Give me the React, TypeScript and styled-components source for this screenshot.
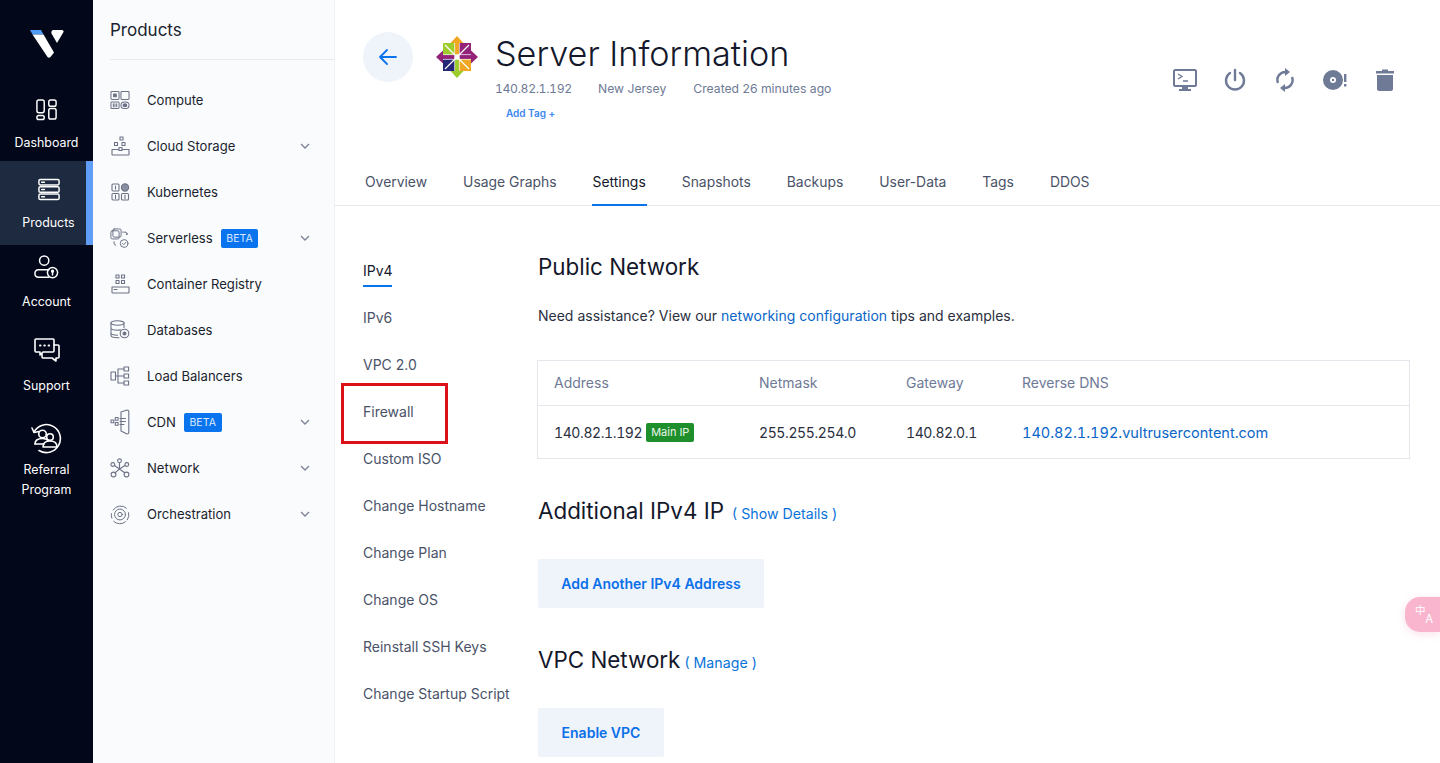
import React from "react";
import styled, { createGlobalStyle } from "styled-components";

const GlobalStyle = createGlobalStyle`
  html, body {
    margin: 0;
    padding: 0;
    height: 763px;
    overflow: hidden;
    background: #fff;
    font-family: Inter, "Liberation Sans", sans-serif;
    color: #1d2233;
  }
  * { box-sizing: border-box; }
`;

const Page = styled.div`
  display: flex;
  height: 763px;
  width: 1440px;
  position: relative;
  overflow: hidden;
`;

const Rail = styled.nav`
  width: 93px;
  flex: none;
  background: #03071a;
  display: flex;
  flex-direction: column;
  align-items: stretch;
`;

const LogoWrap = styled.div`
  height: 90px;
  display: flex;
  justify-content: center;
  padding-top: 29px;
`;

const RailItem = styled.a<{ $active?: boolean; $h: number; $pt: number; $gap: number }>`
  position: relative;
  height: ${(p) => p.$h}px;
  display: flex;
  flex-direction: column;
  align-items: center;
  color: #fff;
  font-size: 12.4px;
  line-height: 20px;
  text-align: center;
  background: ${(p) => (p.$active ? "#1e2a3f" : "transparent")};
  padding-top: ${(p) => p.$pt}px;
  padding-left: ${(p) => (p.$active ? 4 : 0)}px;
  svg { display: block; margin-bottom: ${(p) => p.$gap}px; }
  ${(p) =>
    p.$active
      ? `&::after {
          content: "";
          position: absolute;
          right: 0;
          top: 0;
          bottom: 0;
          width: 7px;
          background: #5f9df7;
        }`
      : ""}
`;

const SubNav = styled.aside`
  width: 242px;
  flex: none;
  background: #fafbfd;
  border-right: 1px solid #eff1f5;
`;

const SubNavTitle = styled.div`
  height: 60px;
  margin-left: 17px;
  padding-top: 19px;
  border-bottom: 1px solid #e8eaee;
  font-size: 17px;
  line-height: 22px;
  color: #1b1f2e;
`;

const SubNavList = styled.div`
  padding-top: 17px;
`;

const SubNavRow = styled.a`
  height: 46px;
  display: flex;
  align-items: center;
  padding-left: 17px;
  padding-right: 24px;
  font-size: 13.1px;
  color: #1b1f2e;
`;

const SubNavIcon = styled.span`
  width: 20px;
  height: 24px;
  margin-right: 17px;
  display: flex;
  align-items: center;
  justify-content: center;
  flex: none;
`;

const Beta = styled.span`
  margin-left: 8px;
  background: #0a73ee;
  color: #dcebff;
  font-size: 10.5px;
  line-height: 19px;
  height: 19px;
  padding: 0 5.5px;
  border-radius: 2px;
  letter-spacing: 0.1px;
`;

const Chevron = styled.svg`
  margin-left: auto;
`;

const Main = styled.main`
  flex: 1;
  min-width: 0;
  background: #fff;
  display: flex;
  flex-direction: column;
`;

const Head = styled.header`
  height: 127px;
  padding: 32px 43px 0 28px;
  display: flex;
  align-items: flex-start;
`;

const BackButton = styled.button`
  width: 50px;
  height: 50px;
  border: 0;
  border-radius: 50%;
  background: #eff4fb;
  display: flex;
  align-items: center;
  justify-content: center;
  margin-right: 22px;
  flex: none;
`;

const OsLogo = styled.div`
  width: 44px;
  height: 44px;
  margin-top: 3px;
  margin-right: 16px;
  flex: none;
`;

const TitleBlock = styled.div`
  display: flex;
  flex-direction: column;
`;

const Title = styled.h1`
  margin: 0;
  font-size: 34.2px;
  line-height: 44px;
  font-weight: 300;
  color: #14182b;
`;

const MetaRow = styled.div`
  display: flex;
  gap: 27px;
  margin-top: 4px;
  font-size: 12.2px;
  line-height: 18px;
  color: #6e7a96;
`;

const MetaIp = styled.span`
  width: 76px;
  font-variant-numeric: tabular-nums;
  letter-spacing: -0.35px;
  white-space: nowrap;
`;

const AddTag = styled.a`
  margin: 8px 0 0 11px;
  font-size: 10px;
  line-height: 14px;
  font-weight: 600;
  color: #3b86ee;
`;

const Actions = styled.div`
  margin-left: auto;
  display: flex;
  gap: 26px;
  padding-top: 36px;
  svg { display: block; }
`;

const TabBar = styled.div`
  height: 79px;
  flex: none;
  border-bottom: 1px solid #e6e8ee;
  display: flex;
  align-items: flex-end;
  padding-left: 30px;
  gap: 36px;
`;

const Tab = styled.a<{ $active?: boolean }>`
  height: 36px;
  font-size: 13.9px;
  line-height: 24px;
  padding: 0 1px;
  margin: 0 -1px -1px;
  color: ${(p) => (p.$active ? "#14182b" : "#4a5268")};
  border-bottom: 2px solid ${(p) => (p.$active ? "#0a73ee" : "transparent")};
`;

const Body = styled.div`
  flex: 1;
  display: flex;
`;

const SideMenu = styled.div`
  width: 203px;
  flex: none;
  padding: 41px 0 0 28px;
  display: flex;
  flex-direction: column;
  position: relative;
`;

const SideItem = styled.a<{ $active?: boolean }>`
  height: 47px;
  font-size: 14px;
  line-height: 47px;
  color: ${(p) => (p.$active ? "#14182b" : "#4a5268")};
  white-space: nowrap;
  position: relative;
  ${(p) =>
    p.$active
      ? `&::after {
          content: "";
          position: absolute;
          left: 0;
          top: 38px;
          width: 29px;
          height: 2px;
          background: #0a73ee;
        }`
      : ""}
`;

const RedBox = styled.div`
  position: absolute;
  left: 6px;
  top: 177px;
  width: 107px;
  height: 61px;
  border: 3px solid #dc1018;
  pointer-events: none;
`;

const Content = styled.section`
  flex: 1;
  padding: 45px 30px 0 0;
`;

const H2 = styled.h2<{ $gap?: number }>`
  margin: 0;
  height: 32px;
  font-size: 22.4px;
  line-height: 32px;
  font-weight: 400;
  color: #14182b;
  display: flex;
  align-items: baseline;
  gap: ${(p) => p.$gap ?? 8}px;
`;

const DetailLink = styled.a`
  font-size: 14.2px;
  color: #0a73d9;
  font-weight: 400;
`;

const Para = styled.p`
  margin: 23px 0 0;
  font-size: 14px;
  line-height: 20px;
  color: #2a2f40;
  a { color: #0a66c8; }
`;

const Table = styled.div`
  margin: 34px 0 0 -1px;
  height: 99px;
  border: 1px solid #e4e6eb;
`;

const TableRow = styled.div<{ $head?: boolean }>`
  display: grid;
  grid-template-columns: 205px 147px 116px 1fr;
  height: ${(p) => (p.$head ? 45 : 52)}px;
  align-items: center;
  padding-left: 16px;
  padding-bottom: ${(p) => (p.$head ? 2 : 0)}px;
  border-bottom: ${(p) => (p.$head ? "1px solid #e4e6eb" : "none")};
  font-size: 14px;
  color: ${(p) => (p.$head ? "#6e7a96" : "#2a2f40")};
`;

const NumCell = styled.div`
  display: flex;
  align-items: center;
  gap: 4px;
  font-variant-numeric: tabular-nums;
  letter-spacing: -0.4px;
`;

const MainIp = styled.span`
  background: #1f8f2c;
  color: #e8f6e8;
  font-size: 11px;
  line-height: 19px;
  height: 19px;
  padding: 0 5px;
  border-radius: 2px;
  letter-spacing: 0;
`;

const DnsLink = styled.a`
  color: #0a66c8;
  font-size: 14.5px;
  font-variant-numeric: tabular-nums;
`;

const SectionHead = styled(H2)<{ $mt: number }>`
  margin-top: ${(p) => p.$mt}px;
`;

const ActionButton = styled.button<{ $w: number }>`
  display: block;
  width: ${(p) => p.$w}px;
  height: 49px;
  margin-top: 32px;
  border: 0;
  border-radius: 2px;
  background: #eff4fb;
  color: #0a6fe8;
  font-family: inherit;
  font-size: 14px;
  font-weight: 600;
`;

const Floater = styled.div`
  position: absolute;
  right: 0;
  top: 597px;
  width: 35px;
  height: 35px;
  background: #f9b4ce;
  border-radius: 15px 0 0 15px;
  box-shadow: 0 2px 8px rgba(240, 180, 200, 0.4);
  color: #fff;
  font-family: "Noto Sans CJK SC", sans-serif;
  display: flex;
  padding: 7px 0 0 10px;
`;

const FloaterZh = styled.span`
  font-size: 10.5px;
  line-height: 12px;
`;

const FloaterA = styled.span`
  font-size: 12px;
  line-height: 13px;
  margin-top: 7px;
`;

const railStroke = {
  fill: "none",
  stroke: "#fff",
  strokeWidth: 1.6,
  strokeLinejoin: "round" as const,
  strokeLinecap: "round" as const,
};

const subStroke = {
  fill: "none",
  stroke: "#6c7386",
  strokeWidth: 1.1,
  strokeLinejoin: "round" as const,
  strokeLinecap: "round" as const,
};

const ChevronDown = () => (
  <Chevron width="10" height="6" viewBox="0 0 10 6">
    <path d="M1 1l4 4 4-4" fill="none" stroke="#7b8296" strokeWidth="1.3" />
  </Chevron>
);

const subIcons: Record<string, React.ReactNode> = {
  compute: (
    <svg width="21" height="20" viewBox="0 0 21 20" {...subStroke}>
      <rect x="1" y="1" width="8.5" height="8.5" rx="1" />
      <rect x="3.8" y="3.8" width="2.8" height="2.8" fill="#6c7386" />
      <rect x="11.5" y="1" width="8.5" height="8.5" rx="1" />
      <rect x="1" y="12" width="8.5" height="7" rx="1" />
      <path d="M3.5 14v3M5.2 14v3M7 14v3" />
      <rect x="11.5" y="12" width="8.5" height="7" rx="3.5" />
      <ellipse cx="15.7" cy="15.5" rx="2" ry="1.6" fill="#6c7386" />
    </svg>
  ),
  storage: (
    <svg width="19" height="20" viewBox="0 0 19 20" {...subStroke}>
      <rect x="9" y="1" width="3" height="3" />
      <rect x="3.5" y="6.5" width="3" height="3" />
      <rect x="11" y="6.5" width="3" height="3" />
      <path d="M1 18.5v-5h17v5c0 .3-.3 .5-.5 .5h-16c-.2 0-.5-.2-.5-.5z" />
      <rect x="8" y="11.5" width="3" height="3" fill="#fafbfd" />
    </svg>
  ),
  kube: (
    <svg width="19" height="18" viewBox="0 0 19 18" {...subStroke}>
      <rect x="1" y="1" width="7" height="7" rx="1" />
      <path d="M4.5 3v3" />
      <circle cx="14" cy="4.5" r="3.6" fill="#8a90a2" />
      <rect x="1" y="10.5" width="7" height="6.5" rx="1" />
      <path d="M4.5 12v3.5" />
      <rect x="10.5" y="10.5" width="7" height="6.5" rx="1" />
      <path d="M14 12v3.5" />
    </svg>
  ),
  serverless: (
    <svg width="22" height="23" viewBox="0 0 22 23" {...subStroke}>
      <rect x="1" y="3" width="9" height="9" rx="1.5" />
      <rect x="3.2" y="1" width="9" height="9" rx="1.5" />
      <path d="M14 4.5h3.5l1.5 2M18.5 5.5l.6 1.3-1.3.3M4.5 15v2.5l2 1.5" />
      <circle cx="15.5" cy="17" r="4.2" />
      <path d="M13.8 17l1.3 1.3 2.2-2.4" />
    </svg>
  ),
  registry: (
    <svg width="19" height="20" viewBox="0 0 19 20" {...subStroke}>
      <rect x="5" y="1" width="3" height="3" />
      <rect x="10.5" y="1" width="3" height="3" />
      <rect x="5" y="6.5" width="3" height="3" />
      <rect x="10.5" y="6.5" width="3" height="3" />
      <path d="M1 18.5V13h17v5.5c0 .3-.3 .5-.5 .5h-16c-.2 0-.5-.2-.5-.5z" />
      <path d="M3 15.5h3" />
    </svg>
  ),
  database: (
    <svg width="20" height="20" viewBox="0 0 20 20" {...subStroke}>
      <ellipse cx="7.5" cy="3" rx="6.5" ry="2.2" />
      <path d="M1 3v12.5c0 1.3 3 2.2 6.5 2.2H9M1 8c0 1.3 3 2.2 6.5 2.2 1 0 2-.1 3-.3M1 13c0 1.3 3 2.2 6.5 2.2M14 3v4.5" />
      <circle cx="14.5" cy="13.5" r="4.3" />
      <circle cx="14.5" cy="13.5" r="1.5" fill="#6c7386" />
    </svg>
  ),
  balancer: (
    <svg width="20" height="20" viewBox="0 0 20 20" {...subStroke}>
      <rect x="1" y="6" width="4.5" height="8" />
      <path d="M8 3v14M5.5 10H14M8 3h6M8 17h6" />
      <rect x="14" y="1" width="4.6" height="4" />
      <rect x="14" y="8" width="4.6" height="4" />
      <rect x="14" y="15" width="4.6" height="4" />
    </svg>
  ),
  cdn: (
    <svg width="20" height="26" viewBox="0 0 20 26" {...subStroke}>
      <path d="M11 3l6-2c1 0 1.8.5 1.8 1.5v21c0 1-.8 1.5-1.8 1.5l-6-3z" />
      <rect x="1" y="11" width="2.8" height="2.8" />
      <rect x="5.3" y="8.5" width="2.8" height="2.8" />
      <rect x="5.3" y="13.5" width="2.8" height="2.8" />
      <path d="M10 9.5h5.5M10 12.5h5.5M10 15.5h4" />
    </svg>
  ),
  network: (
    <svg width="20" height="20" viewBox="0 0 20 20" {...subStroke}>
      <circle cx="9.5" cy="2.8" r="1.9" />
      <circle cx="2.8" cy="6.5" r="1.9" />
      <circle cx="16.8" cy="6.5" r="1.9" />
      <circle cx="3.5" cy="16.5" r="2.4" />
      <circle cx="16.5" cy="16.5" r="2.4" />
      <path d="M9.5 4.7V11M4.5 7.5l5 3.5 5.5-3.5M9.5 11L5 14.8M9.5 11l5.2 3.8" />
    </svg>
  ),
  orchestration: (
    <svg width="21" height="21" viewBox="0 0 22 22" {...subStroke}>
      <path d="M3.5 6A9.5 9.5 0 0 1 18 4M20.5 9a9.5 9.5 0 0 1-1.5 8M17 19a9.5 9.5 0 0 1-13-.5M2 15a9.5 9.5 0 0 1-.5-5" />
      <circle cx="11" cy="11" r="6" />
      <circle cx="11" cy="11" r="2.4" />
    </svg>
  ),
};

const products: { key: string; label: string; beta?: boolean; more?: boolean }[] = [
  { key: "compute", label: "Compute" },
  { key: "storage", label: "Cloud Storage", more: true },
  { key: "kube", label: "Kubernetes" },
  { key: "serverless", label: "Serverless", beta: true, more: true },
  { key: "registry", label: "Container Registry" },
  { key: "database", label: "Databases" },
  { key: "balancer", label: "Load Balancers" },
  { key: "cdn", label: "CDN", beta: true, more: true },
  { key: "network", label: "Network", more: true },
  { key: "orchestration", label: "Orchestration", more: true },
];

const tabs = ["Overview", "Usage Graphs", "Settings", "Snapshots", "Backups", "User-Data", "Tags", "DDOS"];

const sideItems = [
  "IPv4",
  "IPv6",
  "VPC 2.0",
  "Firewall",
  "Custom ISO",
  "Change Hostname",
  "Change Plan",
  "Change OS",
  "Reinstall SSH Keys",
  "Change Startup Script",
];

const CentOs = () => (
  <svg width="44" height="44" viewBox="0 0 44 44">
    <rect x="8" y="8" width="12" height="12" fill="#9ccd2a" />
    <rect x="24" y="8" width="12" height="12" fill="#932279" />
    <rect x="8" y="24" width="12" height="12" fill="#262577" />
    <rect x="24" y="24" width="12" height="12" fill="#efa724" />
    <path d="M22 1l6.5 7H24v12h-4V8h-4.5z" fill="#efa724" />
    <path d="M22 43l-6.5-7H20V24h4v12h4.5z" fill="#9ccd2a" />
    <path d="M1 22l7-6.5V20h12v4H8v4.5z" fill="#932279" />
    <path d="M43 22l-7 6.5V24H24v-4h12v-4.5z" fill="#932279" />
    <path d="M10 10l24 24M34 10L10 34" stroke="#fff" strokeWidth="1.2" fill="none" />
    <path d="M19.6 8v28M24.4 8v28M8 19.6h28M8 24.4h28" stroke="#fff" strokeWidth="0.7" fill="none" />
    <path d="M22 19.5l2.5 2.5-2.5 2.5-2.5-2.5z" fill="#fff" />
  </svg>
);

const actionFill = "#6f7a97";

const App = () => {
  return (
    <Page>
      <GlobalStyle />
      <Rail>
        <LogoWrap>
          <svg width="34" height="29" viewBox="0 0 34 29">
            <path d="M0 1h11l2.5 4.5h-11z" fill="#4f9bf5" />
            <path d="M2.5 5.5h11L24 23.5 20.500 28c-1 1-2 1-3 0z" fill="#fff" />
            <path d="M23 1h9c1 0 2 1 1.5 2L27 14 21.5 4.5c-.5-1 0-3.5 1.5-3.500z" fill="#fff" />
          </svg>
        </LogoWrap>
        <RailItem $h={71} $pt={8} $gap={12}>
          <svg width="21" height="23" viewBox="0 0 23 23" {...railStroke}>
            <rect x="1" y="1" width="8" height="14" rx="2" />
            <rect x="14" y="1" width="8" height="7" rx="2" />
            <rect x="1" y="18" width="8" height="4.5" rx="2" />
            <rect x="14" y="10.5" width="8" height="11.5" rx="2" />
          </svg>
          <span>Dashboard</span>
        </RailItem>
        <RailItem $active $h={84} $pt={17} $gap={12}>
          <svg width="22" height="23" viewBox="0 0 24 25" {...railStroke}>
            <rect x="1" y="1.5" width="22" height="6" rx="1.5" />
            <rect x="1" y="9.5" width="22" height="6" rx="1.5" />
            <rect x="1" y="17.5" width="22" height="6" rx="1.5" />
            <path d="M4 4.5h3M4 12.5h3M4 20.5h3" />
          </svg>
          <span>Products</span>
        </RailItem>
        <RailItem $h={84} $pt={10} $gap={12}>
          <svg width="25" height="25" viewBox="0 0 27 27" {...railStroke}>
            <circle cx="11" cy="6" r="5" />
            <path d="M16 16H5c-3 0-4 2-4 4s1 4 4 4h11" />
            <circle cx="20" cy="19" r="5.5" />
            <circle cx="20" cy="17.5" r="1" fill="#fff" />
            <path d="M20 18v3.5" />
          </svg>
          <span>Account</span>
        </RailItem>
        <RailItem $h={84} $pt={9} $gap={12}>
          <svg width="26" height="26" viewBox="0 0 26 26" {...railStroke}>
            <path d="M2 1h17c.5 0 1 .5 1 1v11c0 .5-.5 1-1 1H9l-3 3v-3H2c-.5 0-1-.5-1-1V2c0-.5.5-1 1-1z" />
            <path d="M20 7h4c.5 0 1 .5 1 1v11c0 .5-.5 1-1 1h-2v3l-4-3H9c-.5 0-1-.5-1-1v-3" />
            <path d="M6 7.5h.5M10.3 7.5h.5M14.6 7.5h.5" strokeWidth="2" />
          </svg>
          <span>Support</span>
        </RailItem>
        <RailItem $h={100} $pt={10} $gap={6}>
          <svg width="31" height="31" viewBox="0 0 31 31" {...railStroke}>
            <path d="M3 9A14 14 0 1 1 8 27.5" />
            <path d="M1 5l2 4.5 5-1" />
            <circle cx="11.5" cy="11" r="3.8" />
            <path d="M4 21c0-3.5 3-5.5 7.5-5.5 3 0 4.5 1 5.5 2" />
            <path d="M4 21h9" />
            <circle cx="19" cy="14" r="3.3" />
            <path d="M12 24c0-4 3-6 7-6s7 2 7 6z" />
          </svg>
          <span>
            Referral
            <br />
            Program
          </span>
        </RailItem>
      </Rail>

      <SubNav>
        <SubNavTitle>Products</SubNavTitle>
        <SubNavList>
          {products.map((p) => (
            <SubNavRow key={p.key}>
              <SubNavIcon>{subIcons[p.key]}</SubNavIcon>
              {p.label}
              {p.beta && <Beta>BETA</Beta>}
              {p.more && <ChevronDown />}
            </SubNavRow>
          ))}
        </SubNavList>
      </SubNav>

      <Main>
        <Head>
          <BackButton aria-label="Back">
            <svg width="20" height="18" viewBox="0 0 20 18" fill="none" stroke="#0a73ee" strokeWidth="1.8" strokeLinecap="round" strokeLinejoin="round">
              <path d="M18 9H2M9 2L2 9l7 7" />
            </svg>
          </BackButton>
          <OsLogo>
            <CentOs />
          </OsLogo>
          <TitleBlock>
            <Title>Server Information</Title>
            <MetaRow>
              <MetaIp>140.82.1.192</MetaIp>
              <span>New Jersey</span>
              <span>Created 26 minutes ago</span>
            </MetaRow>
            <AddTag>Add Tag +</AddTag>
          </TitleBlock>
          <Actions>
            <svg width="24" height="24" viewBox="0 0 24 24">
              <path fillRule="evenodd" d="M2 1h20c1 0 2 1 2 2v14c0 1-1 2-2 2h-7v2h3v2H6v-2h3v-2H2c-1 0-2-1-2-2V3c0-1 1-2 2-2zm0 2v14h20V3z" fill={actionFill} />
              <path d="M5 6l4 2.5L5 11M10 13h5" fill="none" stroke={actionFill} strokeWidth="1.3" />
            </svg>
            <svg width="24" height="24" viewBox="0 0 24 24" fill="none" stroke={actionFill} strokeWidth="2.4" strokeLinecap="round">
              <path d="M12 2v10M7 5a9 9 0 1 0 10 0" />
            </svg>
            <svg width="24" height="24" viewBox="0 0 24 24" fill="none" stroke={actionFill} strokeWidth="2.4">
              <path d="M5 15a8 8 0 0 1 8-11M19 9a8 8 0 0 1-8 11" />
              <path d="M12 0l5 4-5 4zM12 16l-5 4 5 4z" fill={actionFill} stroke="none" />
            </svg>
            <svg width="24" height="24" viewBox="0 0 24 24">
              <path fillRule="evenodd" d="M10 2a10 10 0 1 1 0 20 10 10 0 0 1 0-20zm0 7a3 3 0 1 0 0 6 3 3 0 0 0 0-6z" fill={actionFill} />
              <circle cx="10" cy="12" r="1.2" fill={actionFill} />
              <path d="M21 6h2.4v8H21zM21 16h2.4v2.5H21z" fill={actionFill} />
            </svg>
            <svg width="24" height="24" viewBox="0 0 24 24">
              <path d="M4 7h16v14c0 1-1 2-2 2H6c-1 0-2-1-2-2zM3 3h6V1.5h6V3h6v2.500H3z" fill={actionFill} />
            </svg>
          </Actions>
        </Head>

        <TabBar>
          {tabs.map((t) => (
            <Tab key={t} $active={t === "Settings"}>
              {t}
            </Tab>
          ))}
        </TabBar>

        <Body>
          <SideMenu>
            {sideItems.map((s) => (
              <SideItem key={s} $active={s === "IPv4"}>
                {s}
              </SideItem>
            ))}
            <RedBox />
          </SideMenu>
          <Content>
            <H2>Public Network</H2>
            <Para>
              Need assistance? View our <a>networking configuration</a> tips and examples.
            </Para>
            <Table>
              <TableRow $head>
                <div>Address</div>
                <div>Netmask</div>
                <div>Gateway</div>
                <div>Reverse DNS</div>
              </TableRow>
              <TableRow>
                <NumCell>
                  140.82.1.192 <MainIp>Main IP</MainIp>
                </NumCell>
                <NumCell>255.255.254.0</NumCell>
                <NumCell>140.82.0.1</NumCell>
                <DnsLink>140.82.1.192.vultrusercontent.com</DnsLink>
              </TableRow>
            </Table>
            <SectionHead $mt={36}>
              Additional IPv4 IP <DetailLink>( Show Details )</DetailLink>
            </SectionHead>
            <ActionButton $w={226}>Add Another IPv4 Address</ActionButton>
            <SectionHead $mt={36} $gap={4}>
              VPC Network <DetailLink>( Manage )</DetailLink>
            </SectionHead>
            <ActionButton $w={126}>Enable VPC</ActionButton>
          </Content>
        </Body>
      </Main>
      <Floater>
        <FloaterZh>中</FloaterZh>
        <FloaterA>A</FloaterA>
      </Floater>
    </Page>
  );
};

export default App;
